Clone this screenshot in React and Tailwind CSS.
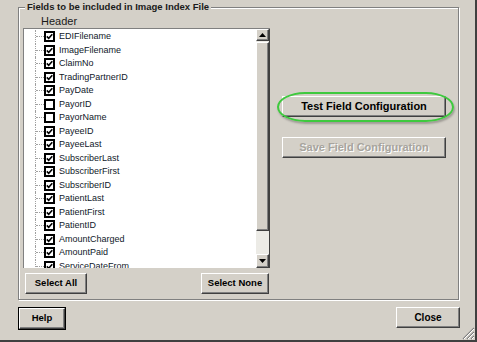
import React from 'react';

const fields = [
    { name: 'EDIFilename', checked: true },
    { name: 'ImageFilename', checked: true },
    { name: 'ClaimNo', checked: true },
    { name: 'TradingPartnerID', checked: true },
    { name: 'PayDate', checked: true },
    { name: 'PayorID', checked: false },
    { name: 'PayorName', checked: false },
    { name: 'PayeeID', checked: true },
    { name: 'PayeeLast', checked: true },
    { name: 'SubscriberLast', checked: true },
    { name: 'SubscriberFirst', checked: true },
    { name: 'SubscriberID', checked: true },
    { name: 'PatientLast', checked: true },
    { name: 'PatientFirst', checked: true },
    { name: 'PatientID', checked: true },
    { name: 'AmountCharged', checked: true },
    { name: 'AmountPaid', checked: true },
    { name: 'ServiceDateFrom', checked: true },
];

// classic raised 3d face
const raised = "bg-[#d4d0c8] border border-t-white border-l-white border-r-[#404040] border-b-[#404040] shadow-[inset_-1px_-1px_0_#808080]";

const Checkbox = ({ checked }) => (
    <div className="w-[11px] h-[11px] border-2 border-black bg-white flex items-center justify-center shrink-0">
        {checked && (
            <svg width="7" height="7" viewBox="0 0 7 7">
                <path d="M0.8 3.4 L2.7 5.3 L6.3 1.2" stroke="#000" strokeWidth="1.6" fill="none" />
            </svg>
        )}
    </div>
);

const FieldRow = ({ name, checked }) => (
    <div className="flex items-center h-[13.5px] shrink-0">
        <div className="w-[20px] h-full pl-[11px] shrink-0">
            <div className="w-[9px] h-full border-l border-dotted border-[#a0a0a0] flex items-center">
                <div className="w-full border-t border-dotted border-[#a0a0a0]" />
            </div>
        </div>
        <Checkbox checked={checked} />
        <span className="ml-[4px] text-[9px] leading-[11px] text-[#10182a]">{name}</span>
    </div>
);

const Arrow = ({ up }) => (
    <svg width="7" height="4" viewBox="0 0 7 4">
        {up ? <path d="M3.5 0 L7 4 L0 4 Z" fill="#000" /> : <path d="M0 0 L7 0 L3.5 4 Z" fill="#000" />}
    </svg>
);

const Scrollbar = () => (
    <div className="w-[14px] h-full flex flex-col border-r border-[#404040] bg-[#ecebe6]">
        <div className={`h-[12px] flex items-center justify-center ${raised}`}>
            <Arrow up />
        </div>
        <div className={`h-[189px] mt-[1px] ${raised}`} />
        <div className="flex-1" />
        <div className={`h-[14px] flex items-center justify-center ${raised}`}>
            <Arrow />
        </div>
    </div>
);

const Btn = ({ children, className = '' }) => (
    <div className={`${raised} h-[21px] flex items-center justify-center font-bold text-[9.5px] text-black ${className}`}>
        {children}
    </div>
);

const App = () => {
    return (
        <div className="relative w-[477px] h-[342px] bg-[#d4d0c8] border-r-2 border-b-2 border-[#404040] pt-[7px] pl-[18px] font-['Liberation_Sans',Arial,sans-serif] overflow-hidden">
            {/* group box */}
            <div className="relative w-[441px] h-[293px] border border-[#808080] shadow-[inset_1px_1px_0_#fff,1px_1px_0_#fff] flex pl-[4px]">
                <div className="absolute -top-[7px] left-[6px] px-[2px] bg-[#d4d0c8] text-[9.5px] leading-[12px] font-bold text-[#1a1a1a]">
                    Fields to be included in Image Index File
                </div>

                <div className="w-[247px] flex flex-col">
                    <div className="h-[20px] pt-[7px] pl-[18px] text-[11px] leading-[13px] text-[#1a1a1a]">Header</div>
                    <div className="h-[240px] flex border-t border-l border-[#808080]">
                        <div className="flex-1 bg-white flex flex-col pt-[1px] overflow-hidden">
                            {fields.map((f) => (
                                <FieldRow key={f.name} name={f.name} checked={f.checked} />
                            ))}
                        </div>
                        <Scrollbar />
                    </div>
                    <div className="mt-[5px] flex justify-between">
                        <Btn className="ml-[2px] w-[62px]">Select All</Btn>
                        <Btn className="mr-[1px] w-[68px]">Select None</Btn>
                    </div>
                </div>

                <div className="ml-[12px] pt-[88px] flex flex-col">
                    <div className="relative">
                        <div className="absolute -left-[5px] -right-[8px] -top-[4px] -bottom-[5px] rounded-[28px/15px] border-2 border-[#3ec93e] shadow-[1px_2px_2px_rgba(0,0,0,0.25)]" />
                        <Btn className="w-[164px] text-[11px]">Test Field Configuration</Btn>
                    </div>
                    <Btn className="mt-[20px] w-[164px] text-[11px] !text-[#a7a49d] [text-shadow:1px_1px_0_#fff]">Save Field Configuration</Btn>
                </div>
            </div>

            {/* bottom buttons */}
            <div className="mt-[7px] w-[442px] flex justify-between">
                <div className="border border-black">
                    <Btn className="w-[46px] h-[19px]">Help</Btn>
                </div>
                <Btn className="w-[64px] text-[10px]">Close</Btn>
            </div>

            {/* size grip */}
            <svg className="absolute right-0 bottom-0" width="14" height="14" viewBox="0 0 14 14">
                <path d="M13 2 L2 13 M13 6 L6 13 M13 10 L10 13" stroke="#808080" strokeWidth="1.2" />
                <path d="M13 3 L3 13 M13 7 L7 13 M13 11 L11 13" stroke="#fff" strokeWidth="1" />
            </svg>
        </div>
    );
};

export default App;
